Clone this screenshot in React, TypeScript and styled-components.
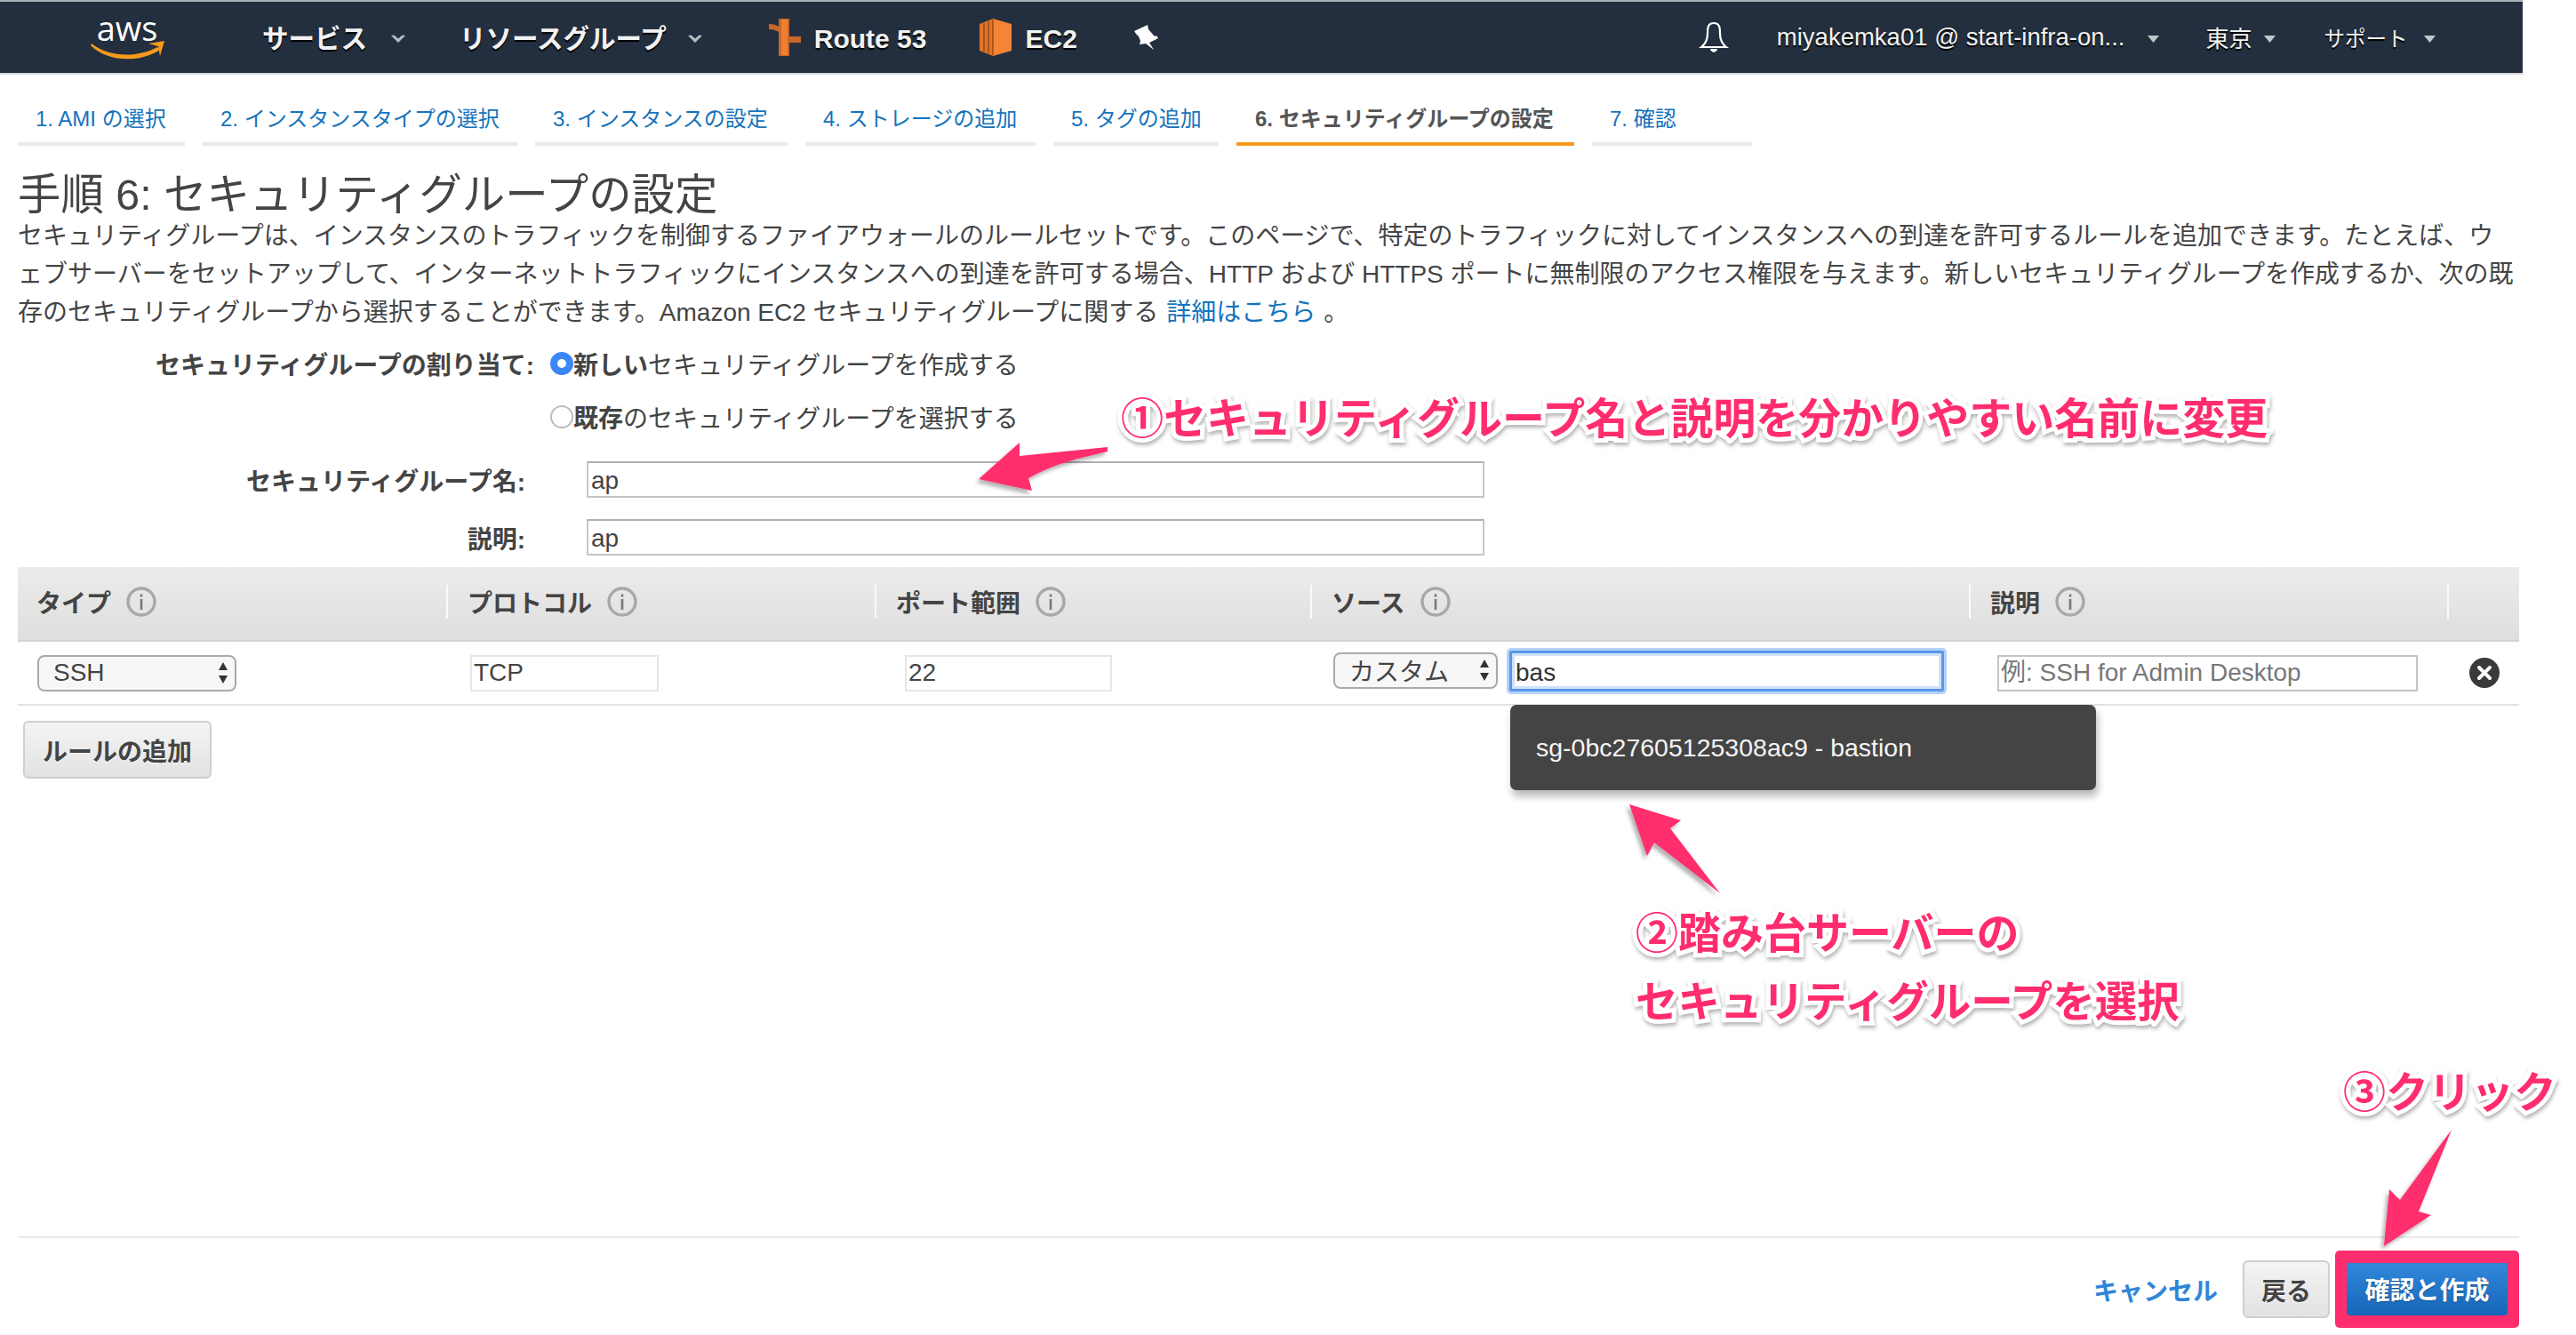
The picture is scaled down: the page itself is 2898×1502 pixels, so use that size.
import React from "react";
import styled, { createGlobalStyle } from "styled-components";

const Global = createGlobalStyle`
  html, body { margin: 0; padding: 0; background: #fff; }
  body { font-family: "Liberation Sans", "Noto Sans CJK JP", sans-serif; color: #444; overflow: hidden; }
  input { font-family: inherit; }
`;

const Page = styled.div`
  position: relative;
  width: 2898px;
  height: 1502px;
  overflow: hidden;
`;
const Main = styled.div`
  width: 2838px;
  display: flex;
  flex-direction: column;
`;
const Header = styled.header`
  height: 80px;
  background: #232f3e;
  border-top: 2px solid #aab0b6;
  border-bottom: 2px solid #d5d7d9;
  display: flex;
  align-items: center;
  color: #f2f2f2;
  font-size: 30px;
  font-weight: 700;
  text-shadow: 0 2px 1px #000;
`;
const HeaderItem = styled.span<{ $ml: number; $size?: number; $weight?: number; $dy?: number }>`
  margin-left: ${(p) => p.$ml}px;
  margin-top: ${(p) => p.$dy ?? 0}px;
  display: inline-flex;
  align-items: center;
  white-space: nowrap;
  font-size: ${(p) => p.$size ?? 30}px;
  font-weight: ${(p) => p.$weight ?? 700};
`;
const HeaderIcon = styled.svg<{ $ml: number }>`
  margin-left: ${(p) => p.$ml}px;
  flex: none;
  overflow: visible;
`;
const Chevron = styled.svg<{ $ml: number }>`
  margin-left: ${(p) => p.$ml}px;
  flex: none;
  margin-top: 4px;
`;
const LogoText = styled.text`
  font-family: "Open Sans", sans-serif;
  font-size: 38px;
  font-weight: 400;
  fill: #fff;
  text-shadow: none;
`;
const Tabs = styled.nav`
  display: flex;
  gap: 20px;
  padding: 32px 0 0 20px;
`;
const Tab = styled.div<{ $w: number; $active?: boolean }>`
  width: ${(p) => p.$w}px;
  height: 48px;
  box-sizing: border-box;
  border-bottom: 4px solid ${(p) => (p.$active ? "#f7981d" : "#eaeaea")};
  padding-left: ${(p) => (p.$active ? 21 : 20)}px;
  font-size: 24px;
  line-height: 36px;
  white-space: nowrap;
  font-weight: ${(p) => (p.$active ? 700 : 400)};
  color: ${(p) => (p.$active ? "#555" : "#1573bb")};
`;
const Title = styled.h1`
  margin: 27px 0 0 20px;
  font-size: 48.4px;
  line-height: 56px;
  font-weight: 400;
  color: #444;
  white-space: nowrap;
`;
const Intro = styled.p`
  margin: -2px 0 0 20px;
  width: 2810px;
  font-size: 28px;
  line-height: 42.8px;
  line-break: loose;
  color: #444;
`;
const Link = styled.a`
  color: #1573bb;
  padding: 0 9px;
`;
const AssignRow = styled.div<{ $mt: number }>`
  margin-top: ${(p) => p.$mt}px;
  display: flex;
  align-items: center;
  height: 40px;
  font-size: 28px;
`;
const FieldLabel = styled.div<{ $w: number }>`
  width: ${(p) => p.$w}px;
  text-align: right;
  font-weight: 700;
  white-space: nowrap;
  flex: none;
`;
const Radio = styled.span<{ $on?: boolean }>`
  width: 26px;
  height: 26px;
  margin-left: 18px;
  flex: none;
  border-radius: 50%;
  box-sizing: border-box;
  background: #fff;
  border: ${(p) => (p.$on ? "8px solid #3b87f5" : "2px solid #bdbdbd")};
`;
const RadioText = styled.span`
  white-space: nowrap;
`;
const RadioStrong = styled.b`
  font-weight: 700;
`;
const FieldRow = styled.div<{ $mt: number }>`
  margin-top: ${(p) => p.$mt}px;
  display: flex;
  align-items: center;
  height: 41px;
  font-size: 28px;
`;
const TextField = styled.input`
  width: 1010px;
  height: 41px;
  margin-left: 69px;
  box-sizing: border-box;
  border: 2px solid #c5c5c5;
  border-top-color: #b0b0b0;
  padding: 2px 3px 0;
  font-size: 28px;
  color: #444;
  outline: none;
`;
const HeadGrid = styled.div`
  margin: 13px 0 0 20px;
  width: 2814px;
  height: 84px;
  box-sizing: border-box;
  border-bottom: 2px solid #d2d2d2;
  background: linear-gradient(#ececec, #dedede);
  display: grid;
  grid-template-columns: 484px 482px 490px 741px 538px 1fr;
  align-items: center;
  font-size: 28px;
  font-weight: 700;
`;
const HeadCell = styled.div<{ $pl: number; $sep?: boolean }>`
  height: 38px;
  margin-top: -4px;
  display: flex;
  align-items: center;
  gap: 17px;
  padding-left: ${(p) => p.$pl}px;
  border-left: ${(p) => (p.$sep ? "2px solid #fafafa" : "none")};
  margin-left: ${(p) => (p.$sep ? -2 : 0)}px;
`;
const RowGrid = styled.div`
  margin-left: 20px;
  width: 2814px;
  height: 72px;
  box-sizing: border-box;
  border-bottom: 2px solid #e3e3e3;
  display: grid;
  grid-template-columns: 484px 482px 490px 741px 538px 1fr;
  align-items: center;
  font-size: 28px;
`;
const RowCell = styled.div<{ $pl: number }>`
  display: flex;
  align-items: center;
  padding-left: ${(p) => p.$pl}px;
`;
const SelectBox = styled.div<{ $w: number; $pl: number; $dy?: number }>`
  width: ${(p) => p.$w}px;
  height: 41px;
  margin-top: ${(p) => p.$dy ?? 0}px;
  box-sizing: border-box;
  flex: none;
  border: 2px solid #aaa;
  border-radius: 8px;
  background: #f7f7f7;
  display: flex;
  align-items: center;
  justify-content: space-between;
  padding: 0 6px 0 ${(p) => p.$pl}px;
  font-size: 28px;
  color: #444;
`;
const CellInput = styled.input<{ $w: number }>`
  width: ${(p) => p.$w}px;
  height: 41px;
  box-sizing: border-box;
  border: 2px solid #e6e6e6;
  padding: 0 2px;
  font-size: 28px;
  color: #444;
  outline: none;
  &::placeholder { color: #777; opacity: 1; }
`;
const DescInput = styled(CellInput)`
  border-color: #c4c4c4;
`;
const FocusInput = styled.input`
  width: 489px;
  height: 46px;
  margin: -4px 0 0 13px;
  box-sizing: border-box;
  border: 3px solid #5a97ea;
  box-shadow: 0 0 0 3px #b5d2f8, inset 0 0 0 3px #cfe1fa;
  border-radius: 2px;
  padding: 3px 4px 0;
  font-size: 28px;
  color: #333;
  outline: none;
`;
const Menu = styled.div`
  position: absolute;
  left: 1699px;
  top: 793px;
  width: 659px;
  height: 96px;
  box-sizing: border-box;
  padding-left: 29px;
  display: flex;
  align-items: center;
  background: #444;
  color: #f4f4f4;
  font-size: 28.5px;
  border-radius: 7px;
  box-shadow: 2px 7px 8px rgba(0, 0, 0, 0.28);
`;
const AddRow = styled.div`
  margin: 17px 0 0 26px;
`;
const GrayButton = styled.button<{ $w: number; $h: number }>`
  width: ${(p) => p.$w}px;
  height: ${(p) => p.$h}px;
  padding: 0;
  border: 2px solid #cfcfcf;
  border-radius: 6px;
  background: linear-gradient(#f4f4f4, #e2e2e2);
  font-family: inherit;
  font-size: 28px;
  font-weight: 700;
  color: #444;
  text-shadow: 0 1px 0 #fff;
`;
const Footer = styled.footer`
  position: absolute;
  left: 20px;
  top: 1391px;
  width: 2814px;
  height: 102px;
  box-sizing: border-box;
  border-top: 2px solid #eaeaea;
  display: flex;
  align-items: center;
  justify-content: flex-end;
  padding-top: 15px;
`;
const CancelLink = styled.a`
  color: #2f86d8;
  font-size: 28px;
  font-weight: 700;
  margin-right: 28px;
`;
const PrimaryFrame = styled.div`
  margin-left: 6px;
  width: 207px;
  height: 87px;
  box-sizing: border-box;
  border-radius: 5px;
  background: #ff2d6d;
  padding: 14px 13px;
  margin-top: -1px;
`;
const PrimaryButton = styled.button`
  width: 181px;
  height: 59px;
  border: none;
  border-radius: 0 0 4px 4px;
  padding: 0;
  background: linear-gradient(#3288dc, #1566b8);
  color: #fff;
  font-family: inherit;
  font-size: 28px;
  font-weight: 700;
  text-shadow: 0 1px 1px #0a4a8a;
`;
const Note = styled.div<{ $x: number; $y: number; $size: number }>`
  position: absolute;
  left: ${(p) => p.$x}px;
  top: ${(p) => p.$y}px;
  font-size: ${(p) => p.$size}px;
  line-height: 1;
  font-weight: 700;
  white-space: nowrap;
  color: #ff2d6d;
  -webkit-text-stroke: 10px #fff;
  paint-order: stroke fill;
  filter: drop-shadow(1px 3px 2px rgba(0, 0, 0, 0.3));
`;
const ArrowLayer = styled.svg`
  position: absolute;
  left: 0;
  top: 0;
  pointer-events: none;
`;

const Chev = ({ ml }: { ml: number }) => (
  <Chevron $ml={ml} width="18" height="12" viewBox="0 0 18 12">
    <path d="M1 2 L9 10 L17 2 L13.5 1.5 L9 5.5 L4.5 1.5 Z" fill="#b8bcc0" />
  </Chevron>
);
const SmallChev = ({ ml }: { ml: number }) => (
  <Chevron $ml={ml} width="15" height="10" viewBox="0 0 15 10">
    <path d="M1 1 L7.5 9 L14 1 Z" fill="#c2c5c8" />
  </Chevron>
);
const Info = () => (
  <svg width="34" height="34" viewBox="0 0 34 34">
    <circle cx="17" cy="17" r="15" fill="none" stroke="#a8a8a8" strokeWidth="3.4" />
    <rect x="15.7" y="14" width="2.6" height="12" fill="#777" />
    <rect x="15.7" y="8.5" width="2.6" height="3" fill="#777" />
  </svg>
);
const UpDown = () => (
  <svg width="14" height="26" viewBox="0 0 14 26">
    <path d="M7 1 L12 10 L2 10 Z M7 25 L12 16 L2 16 Z" fill="#333" />
  </svg>
);

export default function App() {
  return (
    <Page>
      <Global />
      <Main>
        <Header>
          <HeaderIcon $ml={101} width="84" height="54" viewBox="0 0 84 54">
            <LogoText x="42" y="31" textAnchor="middle">aws</LogoText>
            <path d="M2 34 C22 50 54 50 76 38 L79 41 C56 56 20 55 1 36 Z" fill="#f79a1c" />
            <path d="M66 34 L84 31 L79 48 L77 37 Z" fill="#f79a1c" />
          </HeaderIcon>
          <HeaderItem $ml={110} $size={29.5} $dy={-2}>サービス</HeaderItem>
          <Chev ml={26} />
          <HeaderItem $ml={60} $size={29.5} $dy={-2}>リソースグループ</HeaderItem>
          <Chev ml={23} />
          <HeaderIcon $ml={74} width="36" height="42" viewBox="0 0 36 42">
            <path d="M11 0 H23 V20 H36 V27 H23 V42 H11 V15 C8 13 4 12 0 12 V6 C5 6 8 7 11 9 Z" fill="#c9662a" />
            <path d="M14 1 H21 V41 H14 Z" fill="#ee7f31" />
          </HeaderIcon>
          <HeaderItem $ml={15} $dy={3}>Route 53</HeaderItem>
          <HeaderIcon $ml={60} width="36" height="42" viewBox="0 0 36 42">
            <path d="M0 6 L15 0 V42 L0 36 Z" fill="#e0762b" />
            <path d="M15 0 L36 6 V36 L15 42 Z" fill="#f58534" />
            <path d="M5 5 V37 M10 3 V39 M15 1 V41" stroke="#9e4c18" strokeWidth="1.6" />
          </HeaderIcon>
          <HeaderItem $ml={15} $dy={3}>EC2</HeaderItem>
          <HeaderIcon $ml={64} width="27" height="28" viewBox="0 0 27 28">
            <path d="M0 7 L15 0 L16 5 L23 13 L25 12 L27 15 L17 20 L22 28 L13 21 L6 22 L7 18 L5 13 L2 10 Z" fill="#fff" />
          </HeaderIcon>
          <HeaderIcon $ml={609} width="32" height="36" viewBox="0 0 32 36">
            <path d="M16 2 C9 2 9 8 9 14 C9 21 7 25 2 29 H30 C25 25 23 21 23 14 C23 8 23 2 16 2 Z" fill="none" stroke="#fff" strokeWidth="2.2" />
            <path d="M12 31 C13 36 19 36 20 31 Z" fill="#fff" />
          </HeaderIcon>
          <HeaderItem $ml={55} $size={27.5} $weight={400} $dy={-1}>miyakemka01 @ start-infra-on...</HeaderItem>
          <SmallChev ml={24} />
          <HeaderItem $ml={52} $size={26} $weight={400} $dy={-1}>東京</HeaderItem>
          <SmallChev ml={12} />
          <HeaderItem $ml={54} $size={23.5} $weight={400} $dy={-1}>サポート</HeaderItem>
          <SmallChev ml={17} />
        </Header>
        <Tabs>
          <Tab $w={188}>1. AMI の選択</Tab>
          <Tab $w={354}>2. インスタンスタイプの選択</Tab>
          <Tab $w={284}>3. インスタンスの設定</Tab>
          <Tab $w={259}>4. ストレージの追加</Tab>
          <Tab $w={186}>5. タグの追加</Tab>
          <Tab $w={380} $active>6. セキュリティグループの設定</Tab>
          <Tab $w={180}>7. 確認</Tab>
        </Tabs>
        <Title>手順 6: セキュリティグループの設定</Title>
        <Intro>
          セキュリティグループは、インスタンスのトラフィックを制御するファイアウォールのルールセットです。このページで、特定のトラフィックに対してインスタンスへの到達を許可するルールを追加できます。たとえば、ウェブサーバーをセットアップして、インターネットトラフィックにインスタンスへの到達を許可する場合、HTTP および HTTPS ポートに無制限のアクセス権限を与えます。新しいセキュリティグループを作成するか、次の既存のセキュリティグループから選択することができます。Amazon EC2 セキュリティグループに関する
          <Link>詳細はこちら</Link>。
        </Intro>
        <AssignRow $mt={16}>
          <FieldLabel $w={601}>セキュリティグループの割り当て:</FieldLabel>
          <Radio $on />
          <RadioText><RadioStrong>新しい</RadioStrong>セキュリティグループを作成する</RadioText>
        </AssignRow>
        <AssignRow $mt={20}>
          <FieldLabel $w={601} />
          <Radio />
          <RadioText><RadioStrong>既存</RadioStrong>のセキュリティグループを選択する</RadioText>
        </AssignRow>
        <FieldRow $mt={30}>
          <FieldLabel $w={591}>セキュリティグループ名:</FieldLabel>
          <TextField defaultValue="ap" />
        </FieldRow>
        <FieldRow $mt={24}>
          <FieldLabel $w={591}>説明:</FieldLabel>
          <TextField defaultValue="ap" />
        </FieldRow>
        <HeadGrid>
          <HeadCell $pl={21}>タイプ<Info /></HeadCell>
          <HeadCell $pl={22} $sep>プロトコル<Info /></HeadCell>
          <HeadCell $pl={22} $sep>ポート範囲<Info /></HeadCell>
          <HeadCell $pl={22} $sep>ソース<Info /></HeadCell>
          <HeadCell $pl={22} $sep>説明<Info /></HeadCell>
          <HeadCell $pl={0} $sep />
        </HeadGrid>
        <RowGrid>
          <RowCell $pl={22}>
            <SelectBox $w={224} $pl={16}>SSH<UpDown /></SelectBox>
          </RowCell>
          <RowCell $pl={25}><CellInput $w={212} defaultValue="TCP" /></RowCell>
          <RowCell $pl={32}><CellInput $w={233} defaultValue="22" /></RowCell>
          <RowCell $pl={24}>
            <SelectBox $w={185} $pl={16} $dy={-6}>カスタム<UpDown /></SelectBox>
            <FocusInput defaultValue="bas" />
          </RowCell>
          <RowCell $pl={30}><DescInput $w={473} placeholder="例: SSH for Admin Desktop" /></RowCell>
          <RowCell $pl={23}>
            <svg width="34" height="34" viewBox="0 0 34 34">
              <circle cx="17" cy="17" r="17" fill="#3a3a3a" />
              <path d="M11 11 L23 23 M23 11 L11 23" stroke="#fff" strokeWidth="4" strokeLinecap="round" />
            </svg>
          </RowCell>
        </RowGrid>
        <AddRow><GrayButton $w={212} $h={65}>ルールの追加</GrayButton></AddRow>
      </Main>
      <Menu>sg-0bc27605125308ac9 - bastion</Menu>
      <Footer>
        <CancelLink>キャンセル</CancelLink>
        <GrayButton $w={98} $h={65}>戻る</GrayButton>
        <PrimaryFrame><PrimaryButton>確認と作成</PrimaryButton></PrimaryFrame>
      </Footer>
      <ArrowLayer width="2898" height="1502" viewBox="0 0 2898 1502">
        <defs>
          <filter id="arrowShadow" x="-20%" y="-20%" width="140%" height="140%">
            <feDropShadow dx="-3" dy="4" stdDeviation="2" floodColor="#000" floodOpacity="0.3" />
          </filter>
        </defs>
        <g fill="#ff2d6d" filter="url(#arrowShadow)">
          <path d="M1246 503 L1147 513 L1147 498 L1101 539 L1161 552 L1157 538 C1185 522 1215 515 1246 508 Z" />
          <path d="M1833 905 L1891 923 L1879 932 L1935 1005 L1861 948 L1853 963 Z" />
          <path d="M2758 1271 L2721 1363 L2735 1367 L2682 1402 L2688 1338 L2700 1350 Z" />
        </g>
      </ArrowLayer>
      <Note $x={1261} $y={448} $size={48}>①セキュリティグループ名と説明を分かりやすい名前に変更</Note>
      <Note $x={1840} $y={1027} $size={48}>②踏み台サーバーの</Note>
      <Note $x={1840} $y={1104} $size={47.5}>セキュリティグループを選択</Note>
      <Note $x={2636} $y={1206} $size={48}>③クリック</Note>
    </Page>
  );
}
